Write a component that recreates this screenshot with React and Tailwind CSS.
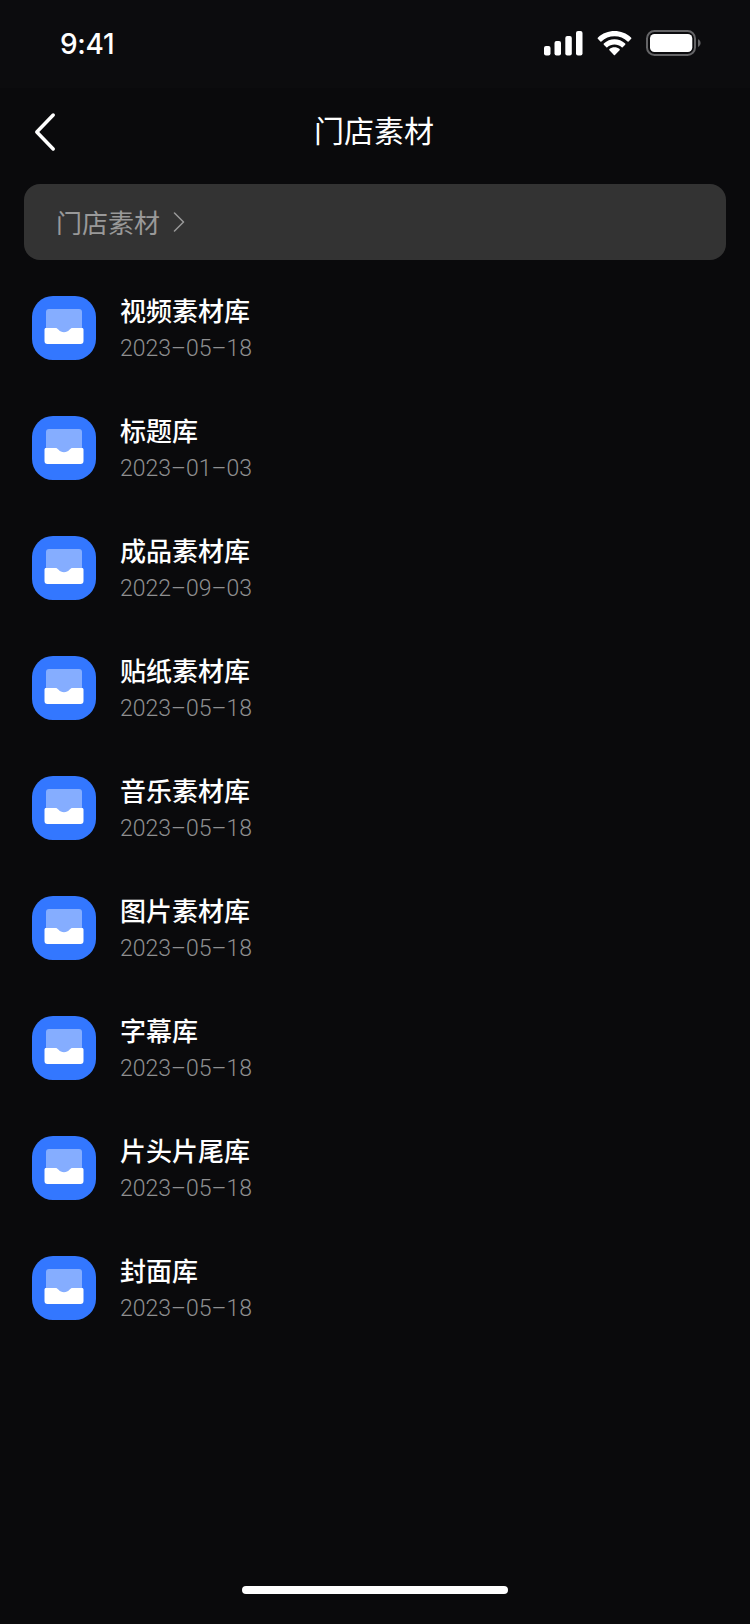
const folders = [
  { name: "视频素材库", date: "2023–05–18" },
  { name: "标题库", date: "2023–01–03" },
  { name: "成品素材库", date: "2022–09–03" },
  { name: "贴纸素材库", date: "2023–05–18" },
  { name: "音乐素材库", date: "2023–05–18" },
  { name: "图片素材库", date: "2023–05–18" },
  { name: "字幕库", date: "2023–05–18" },
  { name: "片头片尾库", date: "2023–05–18" },
  { name: "封面库", date: "2023–05–18" },
];

function StatusBar() {
  return (
    <div className="h-[88px] shrink-0 bg-[#0c0c0e] flex items-center justify-between pl-[60px] pr-[48px]">
      <span className="font-['Inter',sans-serif] font-medium text-[28px] leading-[34px] tracking-[-0.3px]">9:41</span>
      <svg width="160" height="28" viewBox="0 0 160 28" className="mb-[2px]" fill="#fff">
        {/* signal */}
        <rect x="2" y="17" width="6.5" height="9.5" rx="2" />
        <rect x="12.5" y="12" width="6.5" height="14.5" rx="2" />
        <rect x="23.3" y="7" width="6.5" height="19.5" rx="2" />
        <rect x="34" y="2" width="6.5" height="24.5" rx="2" />
        {/* wifi */}
        <path d="M72.5 7.2c4.9 0 9.6 1.9 13.1 5.2.3.3.7.3 1 0l2.6-2.6c.3-.3.3-.8 0-1.1-9.3-8.9-24.1-8.9-33.4 0-.3.3-.3.8 0 1.1l2.6 2.6c.3.3.7.3 1 0 3.5-3.3 8.2-5.2 13.1-5.2z" />
        <path d="M72.5 15.5c2.7 0 5.2 1 7.2 2.8.3.3.7.3 1 0l2.5-2.6c.3-.3.3-.8 0-1.1-6-5.7-15.4-5.7-21.4 0-.3.3-.3.8 0 1.1l2.5 2.6c.3.3.7.3 1 0 2-1.8 4.5-2.8 7.2-2.8z" />
        <path d="M77.6 21.2c.3-.3.3-.8 0-1.1-2.9-2.5-7.3-2.5-10.2 0-.3.3-.3.8 0 1.1l4.5 4.7c.3.3.8.3 1.1 0z" />
        {/* battery */}
        <rect x="105" y="2" width="48" height="24" rx="7.5" fill="none" stroke="#646466" strokeWidth="2" />
        <rect x="108" y="5" width="42.3" height="18" rx="4.5" />
        <path d="M156 10.3v7.6c1.6-.6 2.6-2.1 2.6-3.8s-1-3.2-2.6-3.8z" fill="#646466" />
      </svg>
    </div>
  );
}

function Header() {
  return (
    <div className="h-24 shrink-0 grid grid-cols-[100px_1fr_100px] items-center pb-2">
      <svg width="24" height="40" viewBox="0 0 24 40" className="ml-8" fill="none" stroke="#fff" strokeWidth="3.5" strokeLinecap="round" strokeLinejoin="round">
        <path d="M21.2 3L4.8 20l16.4 17" />
      </svg>
      <h1 className="text-center text-[30px] leading-[44px] pb-1.5 pr-0.5">门店素材</h1>
    </div>
  );
}

function FolderIcon() {
  return (
    <svg width="64" height="64" viewBox="0 0 64 64" className="shrink-0">
      <rect width="64" height="64" rx="21" fill="#3377ff" />
      <path d="M14 16a3 3 0 0 1 3-3h30a3 3 0 0 1 3 3v24H14z" fill="#85adff" />
      <path d="M14 32h9.5c1.2 0 2 .6 2.8 1.5 3 3.6 8.4 3.6 11.4 0 .8-.9 1.6-1.5 2.8-1.5H50c.9 0 1.5.6 1.5 1.5V45a3 3 0 0 1-3 3h-33a3 3 0 0 1-3-3V33.5c0-.9.6-1.5 1.5-1.5z" fill="#fff" />
    </svg>
  );
}

function FolderRow({ name, date }) {
  return (
    <li className="h-[120px] flex items-start gap-6 px-8 pt-7">
      <FolderIcon />
      <div className="flex flex-col">
        <span className="font-medium text-[26px] leading-[28px]">{name}</span>
        <span className="mt-[11px] font-['Roboto',sans-serif] font-light text-[23px] leading-[28px] text-[#8f8f90]">
          {date}
        </span>
      </div>
    </li>
  );
}

function App() {
  return (
    <div className="w-[750px] h-[1624px] bg-[#0a0a0c] text-white flex flex-col overflow-hidden font-['Noto_Sans_CJK_SC',sans-serif]">
      <StatusBar />
      <Header />
      <div className="mx-6 h-[76px] shrink-0 rounded-2xl bg-[#333333] text-[#999999] flex items-center pl-8">
        <span className="text-[26px] leading-[38px]">门店素材</span>
        <svg width="12" height="20" viewBox="0 0 12 20" className="ml-[13px]" fill="none" stroke="#999" strokeWidth="1.5" strokeLinecap="round" strokeLinejoin="round">
          <path d="M1.5 1l9 9-9 9" />
        </svg>
      </div>
      <ul className="mt-2 flex-1">
        {folders.map((folder) => (
          <FolderRow key={folder.name} name={folder.name} date={folder.date} />
        ))}
      </ul>
      <div className="mx-auto mb-[30px] w-[266px] h-2 shrink-0 rounded-full bg-white" />
    </div>
  );
}

export default App;
